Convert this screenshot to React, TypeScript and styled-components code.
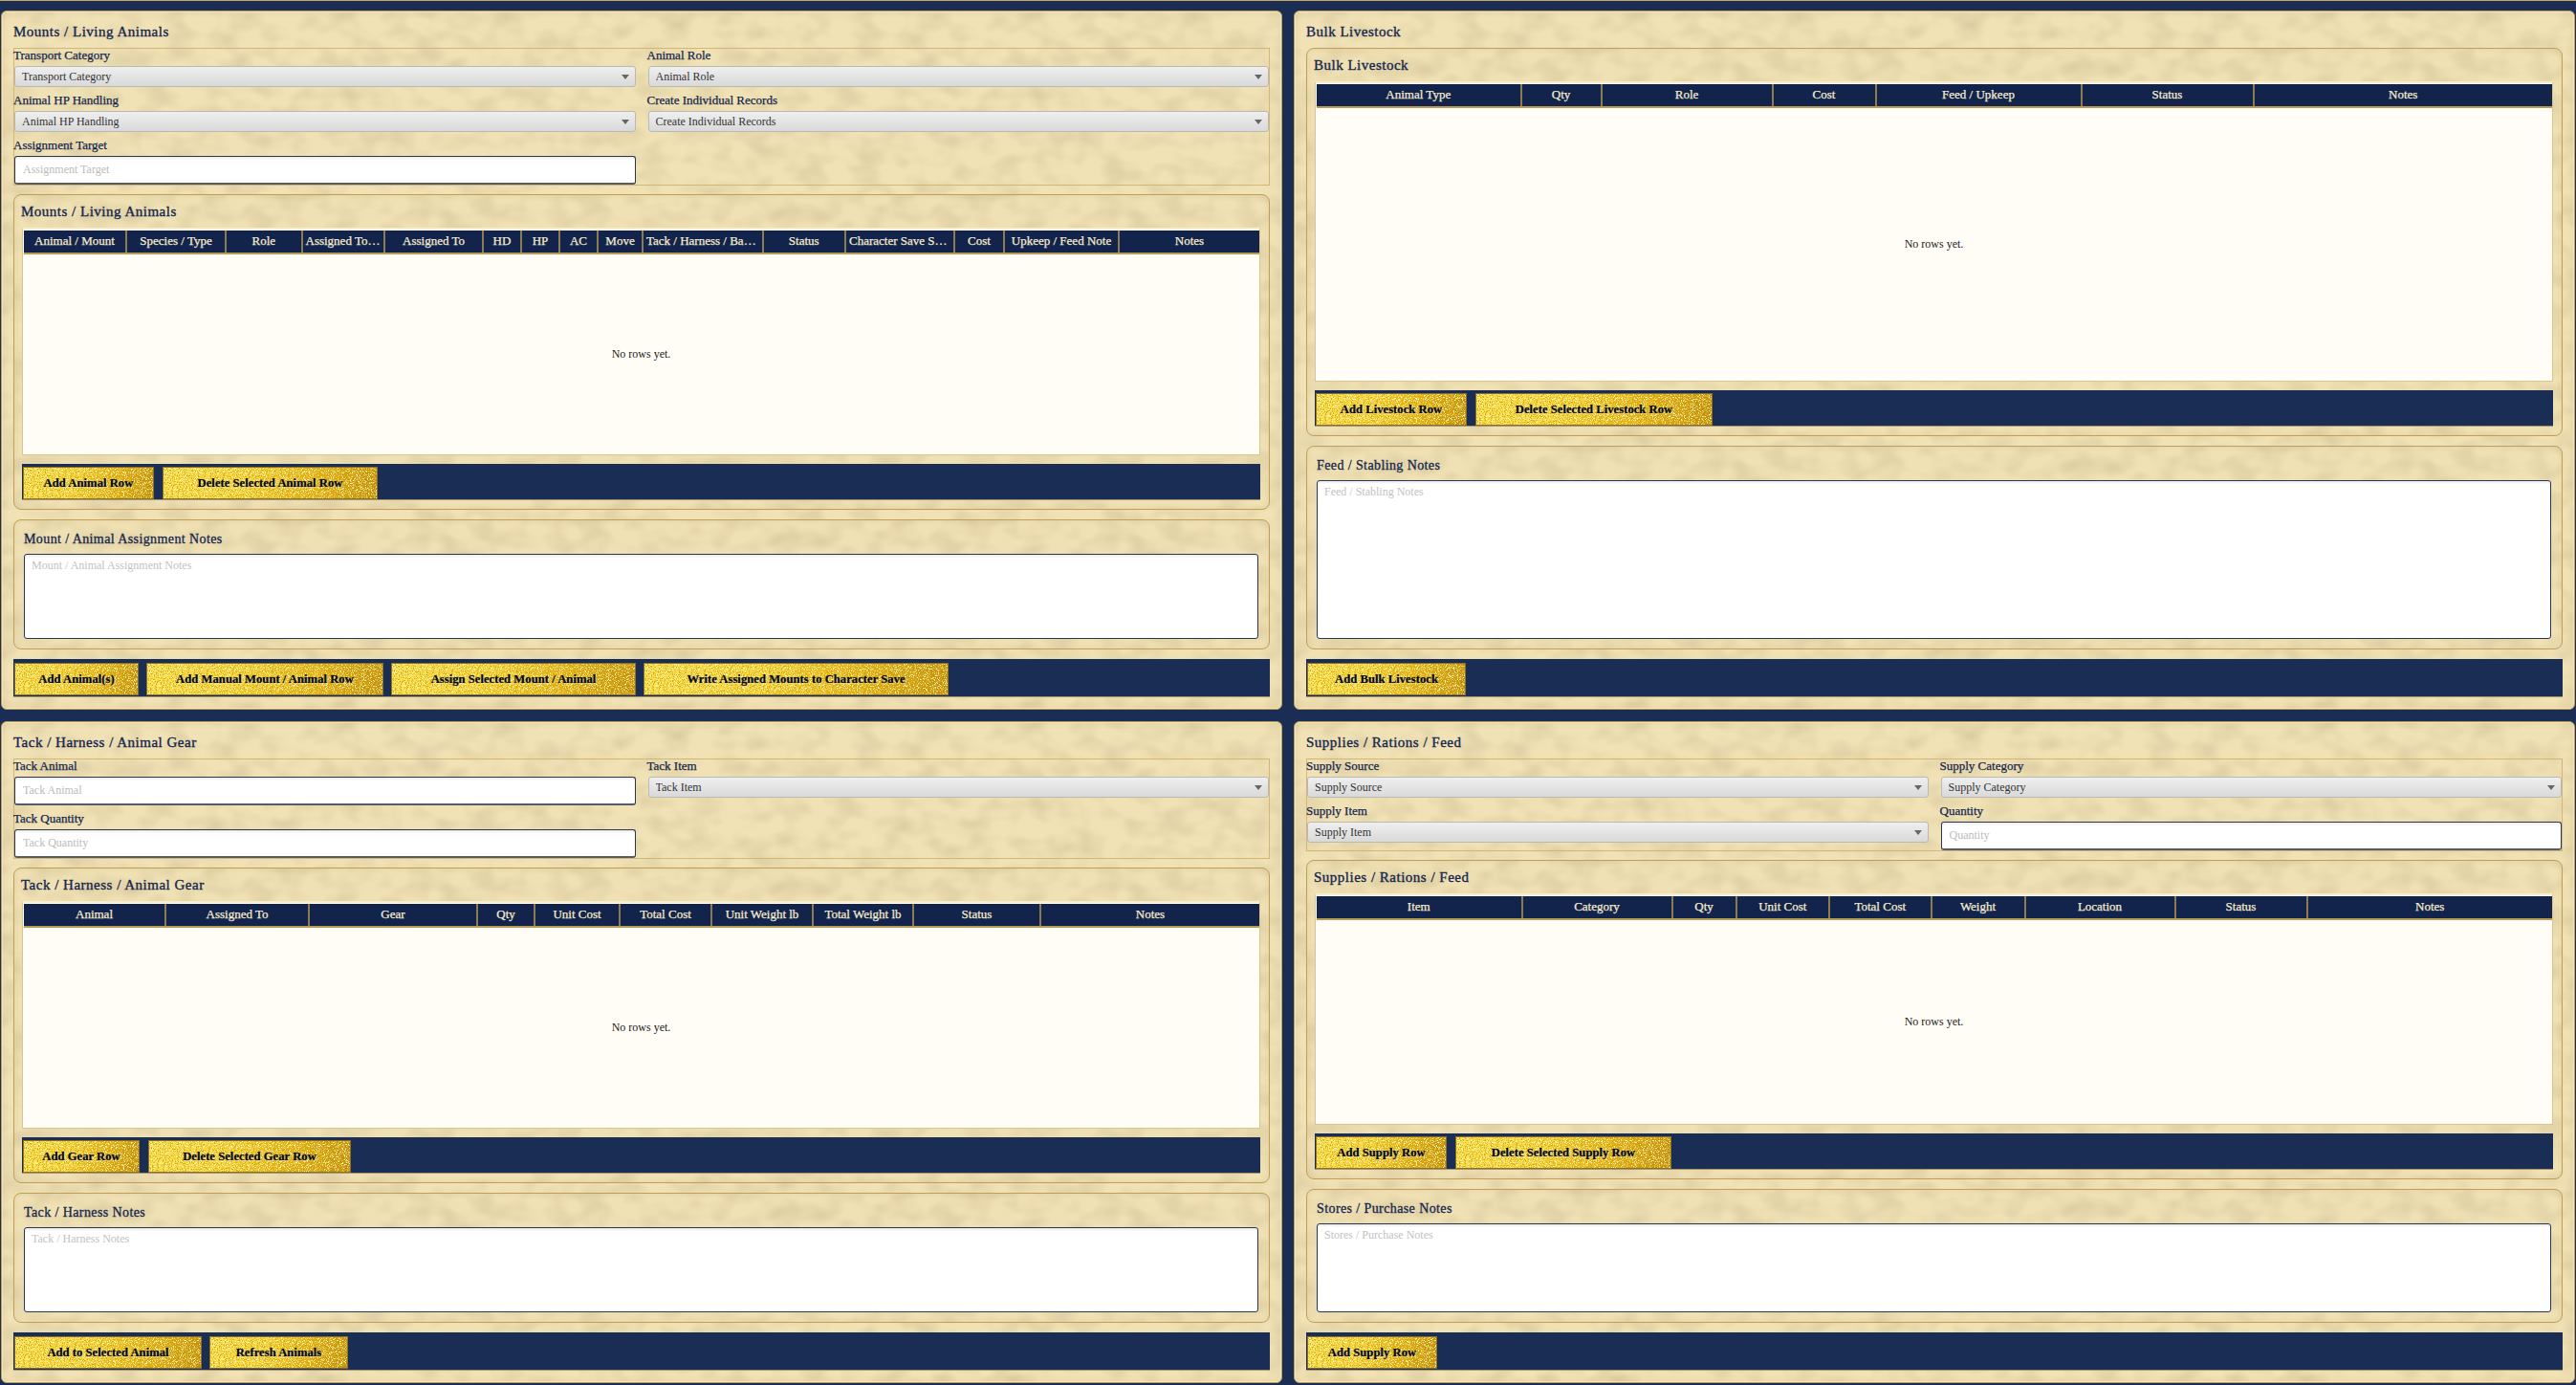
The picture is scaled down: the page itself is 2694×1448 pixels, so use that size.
import React from 'react';
import styled, { createGlobalStyle } from 'styled-components';

const svgUri = (body: string, w: number, h: number) =>
  `url("data:image/svg+xml,${encodeURIComponent(
    `<svg xmlns='http://www.w3.org/2000/svg' width='${w}' height='${h}'>${body}</svg>`
  )}")`;

// soft blotches for the parchment
const parchment = svgUri(
  `<filter id='n' x='0' y='0' width='100%' height='100%'><feTurbulence type='fractalNoise' baseFrequency='.035 .05' numOctaves='2' seed='11' stitchTiles='stitch'/><feColorMatrix values='0 0 0 0 .72  0 0 0 0 .61  0 0 0 0 .36  0 0 0 1.9 -.74'/></filter><rect width='100%' height='100%' filter='url(#n)'/>`,
  720,
  360
);

// speckles for the gold leaf buttons
const goldDark = svgUri(
  `<filter id='n' x='0' y='0' width='100%' height='100%'><feTurbulence type='fractalNoise' baseFrequency='.85' numOctaves='2' seed='3' stitchTiles='stitch'/><feColorMatrix values='0 0 0 0 .62  0 0 0 0 .41  0 0 0 0 0  5 0 0 0 -2.55'/></filter><rect width='100%' height='100%' filter='url(#n)'/>`,
  260,
  80
);
const goldLight = svgUri(
  `<filter id='n' x='0' y='0' width='100%' height='100%'><feTurbulence type='fractalNoise' baseFrequency='.9' numOctaves='2' seed='9' stitchTiles='stitch'/><feColorMatrix values='0 0 0 0 1  0 0 0 0 .93  0 0 0 0 .45  5 0 0 0 -2.4'/></filter><rect width='100%' height='100%' filter='url(#n)'/>`,
  260,
  80
);

const NAVY = '#1a2d54';
const GOLD = '#bf9f58';
const INK = '#14264e';
const SERIF = '"Liberation Serif", "Times New Roman", serif';

const GlobalStyle = createGlobalStyle`
  html, body {
    margin: 0;
    padding: 0;
    background: ${NAVY};
  }
  * {
    box-sizing: border-box;
  }
`;

const Page = styled.div`
  width: 2694px;
  height: 1448px;
  overflow: hidden;
  padding: 10px 1px 0;
  border-top: 1px solid #c9a758;
  background: ${NAVY};
  display: grid;
  grid-template-columns: 1340px 1340px;
  grid-template-rows: 731px 692px;
  gap: 12px;
  font-family: ${SERIF};
`;

const Panel = styled.section`
  display: flex;
  flex-direction: column;
  gap: 10px;
  padding: 0 12px 12px;
  border: 1px solid ${GOLD};
  border-radius: 6px;
  background-color: #f1e2b6;
  background-image: ${parchment};
  box-shadow: inset 0 0 0 1px rgba(250, 240, 205, 0.6), inset 0 0 8px rgba(170, 140, 80, 0.2);
  min-height: 0;
`;

const PanelTitle = styled.h2`
  margin: 0 0 -1px;
  padding-top: 13px;
  height: 29px;
  font-size: 15px;
  line-height: 17px;
  font-weight: 400;
  letter-spacing: 0.5px;
  -webkit-text-stroke: 0.35px ${INK};
  color: ${INK};
`;

const FormBox = styled.div`
  display: grid;
  grid-template-columns: 1fr 1fr;
  column-gap: 13px;
  row-gap: 7px;
  align-items: start;
  border: 1px solid #d2b673;
  margin-bottom: -1px;
`;

const Field = styled.div`
  display: flex;
  flex-direction: column;
`;

const FieldLabel = styled.label`
  height: 18px;
  line-height: 14px;
  font-size: 13px;
  font-weight: 400;
  margin-left: -1px;
  -webkit-text-stroke: 0.25px ${INK};
  color: ${INK};
`;

const SelectWrap = styled.div`
  position: relative;
  &::after {
    content: '';
    position: absolute;
    right: 7px;
    top: 9px;
    border-left: 4px solid transparent;
    border-right: 4px solid transparent;
    border-top: 5px solid #666;
  }
`;

const SelectBox = styled.select`
  appearance: none;
  display: block;
  width: 100%;
  height: 22px;
  padding: 0 7px;
  font-family: ${SERIF};
  font-size: 12px;
  color: #333;
  border: 1px solid #b9b9b4;
  border-radius: 3px;
  background: linear-gradient(#efefef, #d9d9d9);
`;

const TextInput = styled.input`
  display: block;
  width: 100%;
  height: 30px;
  padding: 0 8px;
  font-family: ${SERIF};
  font-size: 12px;
  background: #fff;
  border: 1px solid #2b3750;
  border-bottom: 2px solid #555b68;
  border-radius: 3px;
  box-shadow: inset 0 2px 2px #eee;
  &::placeholder {
    color: #bbb;
  }
`;

const Section = styled.section<{ $grow?: boolean; $pad: number }>`
  display: flex;
  flex-direction: column;
  flex: ${(p) => (p.$grow ? '1 1 0' : '0 0 auto')};
  min-height: 0;
  padding: 0 ${(p) => p.$pad + 1}px ${(p) => (p.$grow ? 9 : 10)}px ${(p) => p.$pad}px;
  border: 1px solid ${GOLD};
  border-radius: 8px;
  background-color: #f0e1b4;
  background-image: ${parchment};
  background-position: 130px 70px;
  box-shadow: inset 0 0 6px rgba(170, 140, 80, 0.15);
`;

const SectionTitle = styled.h3`
  margin: 0 0 0 -1px;
  padding-top: 9px;
  height: 34px;
  font-size: 15px;
  line-height: 17px;
  font-weight: 400;
  letter-spacing: 0.5px;
  -webkit-text-stroke: 0.35px ${INK};
  color: ${INK};
`;

const NotesTitle = styled.h3`
  margin: 0;
  padding-top: 11px;
  height: 35px;
  font-size: 14px;
  line-height: 17px;
  font-weight: 400;
  letter-spacing: 0.4px;
  -webkit-text-stroke: 0.3px ${INK};
  color: ${INK};
`;

const NotesArea = styled.textarea<{ $h: number }>`
  display: block;
  width: 100%;
  height: ${(p) => p.$h}px;
  padding: 4px 7px;
  resize: none;
  font-family: ${SERIF};
  font-size: 12px;
  background: #fff;
  border: 1px solid #2b3750;
  border-radius: 3px;
  box-shadow: inset 0 2px 2px #eee;
  &::placeholder {
    color: #c2c2c2;
  }
`;

const TableFrame = styled.div`
  flex: 1 1 0;
  min-height: 0;
  display: flex;
  flex-direction: column;
  border: 1px solid #d9c58e;
  border-top: 2px solid #f6edcf;
  background: #fffdf5;
`;

const HeadRow = styled.div<{ $cols: string }>`
  display: grid;
  grid-template-columns: ${(p) => p.$cols};
  margin: 1px 0 0 1px;
  height: 25px;
  background: #12244c;
  border-bottom: 2px solid #b99a52;
`;

const HeadCell = styled.div`
  padding: 0 3px;
  line-height: 22px;
  text-align: center;
  font-size: 13px;
  font-weight: 400;
  -webkit-text-stroke: 0.25px #f6ecd0;
  color: #f6ecd0;
  white-space: nowrap;
  overflow: hidden;
  text-overflow: ellipsis;
  border-right: 2px solid #8c7b50;
  &:last-child {
    border-right: 0;
  }
`;

const EmptyBody = styled.div`
  flex: 1;
  display: flex;
  align-items: center;
  justify-content: center;
  font-size: 12px;
  color: #222;
`;

const Toolbar = styled.div<{ $main?: boolean }>`
  display: flex;
  flex: 0 0 auto;
  gap: ${(p) => (p.$main ? 8 : 9)}px;
  height: ${(p) => (p.$main ? 40 : 38)}px;
  margin-top: ${(p) => (p.$main ? 0 : 9)}px;
  padding: ${(p) => (p.$main ? '4px 0 1px 1px' : '3px 0 0 1px')};
  background: ${NAVY};
  border-bottom: 1px solid #a8966a;
`;

const GoldButton = styled.button<{ $w: number }>`
  width: ${(p) => p.$w}px;
  flex: 0 0 auto;
  padding: 1px 0 0;
  font-family: ${SERIF};
  font-size: 12.7px;
  font-weight: 700;
  color: #0c0c0c;
  text-shadow: 0 0 1px rgba(0, 0, 0, 0.55), 1px 1px 1px rgba(255, 244, 205, 0.7);
  border: 1px solid #8d7028;
  background-color: #f0c222;
  background-image: ${goldDark}, ${goldLight},
    linear-gradient(100deg, #fbdc4a 0%, #f7cf33 40%, #e2aa10 72%, #bf8607 100%);
`;

type Btn = [string, number];

function Table(props: { cols: string; heads: string[] }) {
  return (
    <TableFrame>
      <HeadRow $cols={props.cols}>
        {props.heads.map((h) => (
          <HeadCell key={h}>{h}</HeadCell>
        ))}
      </HeadRow>
      <EmptyBody>No rows yet.</EmptyBody>
    </TableFrame>
  );
}

function Buttons(props: { items: Btn[]; main?: boolean }) {
  return (
    <Toolbar $main={props.main}>
      {props.items.map(([label, w]) => (
        <GoldButton key={label} $w={w}>
          {label}
        </GoldButton>
      ))}
    </Toolbar>
  );
}

function PickField({ label }: { label: string }) {
  return (
    <Field>
      <FieldLabel>{label}</FieldLabel>
      <SelectWrap>
        <SelectBox defaultValue={label}>
          <option>{label}</option>
        </SelectBox>
      </SelectWrap>
    </Field>
  );
}

function InputField({ label }: { label: string }) {
  return (
    <Field>
      <FieldLabel>{label}</FieldLabel>
      <TextInput placeholder={label} />
    </Field>
  );
}

function TableSection(props: {
  title: string;
  cols: string;
  heads: string[];
  buttons: Btn[];
}) {
  return (
    <Section $grow $pad={8}>
      <SectionTitle>{props.title}</SectionTitle>
      <Table cols={props.cols} heads={props.heads} />
      <Buttons items={props.buttons} />
    </Section>
  );
}

function NotesSection(props: { title: string; height: number }) {
  return (
    <Section $pad={10}>
      <NotesTitle>{props.title}</NotesTitle>
      <NotesArea $h={props.height} placeholder={props.title} />
    </Section>
  );
}

export default function App() {
  return (
    <Page>
      <GlobalStyle />

      <Panel>
        <PanelTitle>Mounts / Living Animals</PanelTitle>
        <FormBox>
          <PickField label="Transport Category" />
          <PickField label="Animal Role" />
          <PickField label="Animal HP Handling" />
          <PickField label="Create Individual Records" />
          <InputField label="Assignment Target" />
        </FormBox>
        <TableSection
          title="Mounts / Living Animals"
          cols="108px 104px 79.5px 86.5px 103px 40px 40px 40px 47px 125.5px 86.5px 114px 52px 120px 1fr"
          heads={[
            'Animal / Mount',
            'Species / Type',
            'Role',
            'Assigned To Type',
            'Assigned To',
            'HD',
            'HP',
            'AC',
            'Move',
            'Tack / Harness / Barding',
            'Status',
            'Character Save Status',
            'Cost',
            'Upkeep / Feed Note',
            'Notes',
          ]}
          buttons={[
            ['Add Animal Row', 137],
            ['Delete Selected Animal Row', 225],
          ]}
        />
        <NotesSection title="Mount / Animal Assignment Notes" height={89} />
        <Buttons
          main
          items={[
            ['Add Animal(s)', 130],
            ['Add Manual Mount / Animal Row', 248],
            ['Assign Selected Mount / Animal', 256],
            ['Write Assigned Mounts to Character Save', 319],
          ]}
        />
      </Panel>

      <Panel>
        <PanelTitle>Bulk Livestock</PanelTitle>
        <TableSection
          title="Bulk Livestock"
          cols="214.5px 84px 179px 108px 215px 180px 1fr"
          heads={['Animal Type', 'Qty', 'Role', 'Cost', 'Feed / Upkeep', 'Status', 'Notes']}
          buttons={[
            ['Add Livestock Row', 158],
            ['Delete Selected Livestock Row', 248],
          ]}
        />
        <NotesSection title="Feed / Stabling Notes" height={166} />
        <Buttons main items={[['Add Bulk Livestock', 166]]} />
      </Panel>

      <Panel>
        <PanelTitle>Tack / Harness / Animal Gear</PanelTitle>
        <FormBox>
          <InputField label="Tack Animal" />
          <PickField label="Tack Item" />
          <InputField label="Tack Quantity" />
        </FormBox>
        <TableSection
          title="Tack / Harness / Animal Gear"
          cols="149px 150px 176px 60px 89px 96px 106px 105px 133px 1fr"
          heads={[
            'Animal',
            'Assigned To',
            'Gear',
            'Qty',
            'Unit Cost',
            'Total Cost',
            'Unit Weight lb',
            'Total Weight lb',
            'Status',
            'Notes',
          ]}
          buttons={[
            ['Add Gear Row', 122],
            ['Delete Selected Gear Row', 212],
          ]}
        />
        <NotesSection title="Tack / Harness Notes" height={89} />
        <Buttons
          main
          items={[
            ['Add to Selected Animal', 196],
            ['Refresh Animals', 145],
          ]}
        />
      </Panel>

      <Panel>
        <PanelTitle>Supplies / Rations / Feed</PanelTitle>
        <FormBox>
          <PickField label="Supply Source" />
          <PickField label="Supply Category" />
          <PickField label="Supply Item" />
          <InputField label="Quantity" />
        </FormBox>
        <TableSection
          title="Supplies / Rations / Feed"
          cols="215.5px 157px 67px 97.5px 106.5px 98px 157px 138px 1fr"
          heads={[
            'Item',
            'Category',
            'Qty',
            'Unit Cost',
            'Total Cost',
            'Weight',
            'Location',
            'Status',
            'Notes',
          ]}
          buttons={[
            ['Add Supply Row', 137],
            ['Delete Selected Supply Row', 226],
          ]}
        />
        <NotesSection title="Stores / Purchase Notes" height={93} />
        <Buttons main items={[['Add Supply Row', 136]]} />
      </Panel>
    </Page>
  );
}
